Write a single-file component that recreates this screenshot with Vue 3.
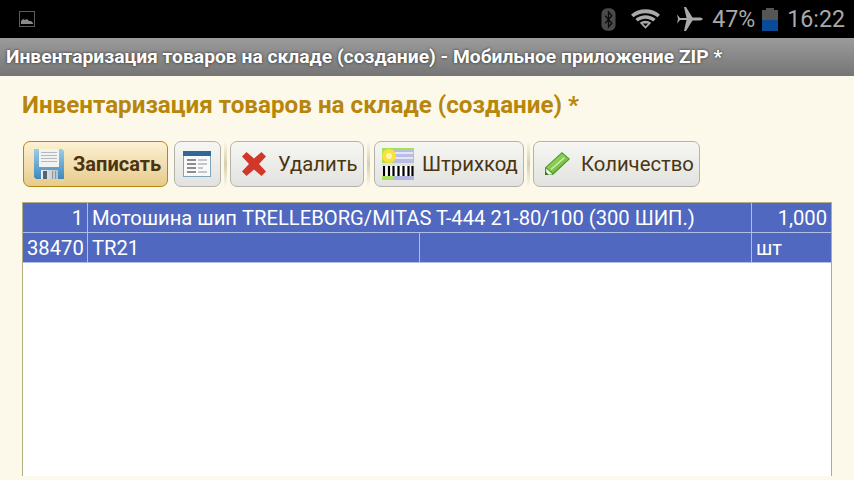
<template>
  <div class="screen">
    <div class="status">
      <svg class="st-pic" width="16" height="16" viewBox="0 0 16 16">
        <rect x="0.5" y="0.5" width="15" height="15" fill="none" stroke="#5c5c5c" stroke-width="1" />
        <path d="M2 13V10l2-2 2 1 2-1 2 2 2 0 2 2v1z" fill="#8a8a8a" />
      </svg>
      <div class="st-right">
        <svg class="st-bt" width="15" height="23" viewBox="0 0 16 24">
          <rect x="0.5" y="0" width="15" height="24" rx="6" fill="#4a4a4a" />
          <path d="M4.5 8l7 8-3.5 4V4l3.5 4-7 8" fill="none" stroke="#0c0c0c" stroke-width="1.4" />
        </svg>
        <svg class="st-wifi" width="29" height="20" viewBox="0 0 30 20">
          <path d="M0 5.500C8 -1.800 22 -1.800 30 5.500l-2.600 2.700C20.500 2.500 9.500 2.500 2.600 8.200z" fill="#a9a9a9" />
          <path d="M4.500 10C11 4.800 19 4.800 25.500 10l-2.600 2.700C18 8.800 12 8.800 7.100 12.700z" fill="#a9a9a9" />
          <path d="M9 14C13 11 17 11 21 14l-6 6z" fill="#a9a9a9" />
          <path d="M12.300 14.700h5.400L15 17.500z" fill="#000" />
        </svg>
        <svg class="st-plane" width="26" height="24" viewBox="0 0 26 24">
          <path d="M0 7.500l3 3.500h6.500L7 0h2l6.500 10.500H23c3.500 0 3.500 3 0 3h-7.500L9 24H7l2.500-11H3l-3 3.500 1-4.500z" fill="#a9a9a9" />
        </svg>
        <span class="st-text st-pct">47%</span>
        <div class="st-batt"><i class="st-cap"></i><i class="st-empty"></i><i class="st-fill"></i></div>
        <span class="st-text st-time">16:22</span>
      </div>
    </div>

    <div class="titlebar">Инвентаризация товаров на складе (создание) - Мобильное приложение ZIP *</div>

    <div class="content">
      <h1 class="heading">Инвентаризация товаров на складе (создание) *</h1>

      <div class="toolbar">
        <button class="btn primary">
          <svg width="30" height="30" viewBox="0 0 30 30">
            <defs>
              <linearGradient id="fl" x1="0" y1="0" x2="0" y2="1">
                <stop offset="0" stop-color="#9acbea" />
                <stop offset="1" stop-color="#3f88bd" />
              </linearGradient>
              <linearGradient id="sh" x1="0" y1="0" x2="1" y2="0">
                <stop offset="0" stop-color="#eef0f1" />
                <stop offset="1" stop-color="#b8bfc4" />
              </linearGradient>
              <linearGradient id="pen" x1="0" y1="0" x2="1" y2="1">
                <stop offset="0" stop-color="#a8e070" />
                <stop offset="1" stop-color="#5fae35" />
              </linearGradient>
            </defs>
            <path d="M0 0h28l2 2v28H2l-2-2z" fill="url(#fl)" />
            <rect x="5" y="0" width="20" height="18" fill="#f2f2f0" />
            <path d="M7 3.500h16M7 6.500h16M7 9.500h16M7 12.500h16" stroke="#b4b9bd" stroke-width="1" />
            <rect x="7" y="21" width="17" height="9" fill="url(#sh)" />
            <rect x="9" y="22" width="4" height="8" fill="#55646e" />
            <rect x="18" y="22" width="1" height="8" fill="#8d979e" />
            <rect x="21" y="22" width="1" height="8" fill="#8d979e" />
          </svg>
          <span>Записать</span>
        </button>
        <button class="btn square">
          <svg width="28" height="26" viewBox="0 0 28 26">
            <rect x="0.500" y="0.500" width="27" height="25" fill="#f7f9fb" stroke="#7fa2bd" />
            <rect x="0" y="0" width="28" height="5" fill="#2f6796" />
            <path d="M4 9h9M4 13h9M4 17h9M4 21h9" stroke="#8d8d8d" stroke-width="2" />
            <path d="M15 9h9M15 13h9M15 17h5M15 21h9" stroke="#c3c7ca" stroke-width="2" />
          </svg>
        </button>
        <i class="sep"></i>
        <button class="btn del">
          <svg width="24" height="24" viewBox="0 0 24 24">
            <path d="M4.500 0L12 6.500 19.500 0 24 4.500 17 12l7 7.500-4.500 4.500L12 17.500 4.500 24 0 19.500 7 12 0 4.500z" fill="#d1382a" />
          </svg>
          <span>Удалить</span>
        </button>
        <i class="sep"></i>
        <button class="btn code">
          <svg width="32" height="32" viewBox="0 0 32 32">
            <rect width="32" height="32" fill="#a9e05a" />
            <rect x="12" y="1" width="20" height="14" fill="#b9bde4" />
            <path d="M13 5h18M13 10h18" stroke="#e4e6f6" stroke-width="2" />
            <circle cx="7" cy="8" r="7" fill="#f8e23e" />
            <circle cx="7" cy="8" r="3" fill="#fff6b0" />
            <rect x="0" y="15" width="32" height="3" fill="#dfe7d0" />
            <rect x="0" y="18" width="32" height="10" fill="#fff" />
            <path d="M2 18v10M7 18v10M11.500 18v10M16.500 18v10M21.500 18v10M26.500 18v10M30.500 18v10" stroke="#000" stroke-width="2.200" />
            <rect x="12" y="28" width="20" height="4" fill="#b0b4e0" />
          </svg>
          <span>Штрихкод</span>
        </button>
        <i class="sep"></i>
        <button class="btn qty">
          <svg width="26" height="26" viewBox="0 0 26 26">
            <path d="M0 16.500L17 1l8 7L8 24H0z" fill="#4f9a2a" />
            <path d="M1.500 16.500L17 2.500l6.500 5.600L8 22z" fill="url(#pen)" />
            <path d="M6 18.500L19.500 6.500" stroke="#d0f0a8" stroke-width="1.500" />
            <path d="M1.200 17.500l6.300 5.700L1.200 24z" fill="#f6f6f4" />
            <path d="M0 20l4 4H0z" fill="#2f7d1e" />
          </svg>
          <span>Количество</span>
        </button>
      </div>

      <div class="table">
        <div class="row">
          <div class="cell num">1</div>
          <div class="cell name">Мотошина шип TRELLEBORG/MITAS T-444 21-80/100 (300 ШИП.)</div>
          <div class="cell num last">1,000</div>
        </div>
        <div class="row">
          <div class="cell num">38470</div>
          <div class="cell">TR21</div>
          <div class="cell"></div>
          <div class="cell last">шт</div>
        </div>
      </div>
    </div>
  </div>
</template>

<script setup>
</script>

<style>
html, body { margin: 0; background: #fcf9ea; }
</style>

<style scoped>
.screen { width: 854px; height: 480px; overflow: hidden; background: #fcf9ea; font-family: Roboto, sans-serif; display: flex; flex-direction: column; }
.status { height: 38px; flex: none; background: #000; display: flex; align-items: center; justify-content: space-between; padding: 0 9px 0 19px; box-sizing: border-box; }
.st-right { display: flex; align-items: center; }
.st-bt { margin-right: 15px; }
.st-wifi { margin-right: 17px; }
.st-plane { margin-right: 9px; }
.st-text { color: #a9a9a9; font-size: 23.2px; line-height: 38px; }
.st-batt { position: relative; width: 16px; height: 23px; margin: 0 9px 0 7px; }
.st-batt i { position: absolute; display: block; }
.st-cap { left: 4px; top: 0; width: 8px; height: 2px; background: #555; }
.st-empty { left: 0; top: 2px; width: 16px; height: 10px; background: #555; }
.st-fill { left: 0; top: 12px; width: 16px; height: 11px; background: #0b4a96; }
.titlebar { height: 38px; flex: none; box-sizing: border-box; padding-left: 6px; line-height: 38px; color: #fff; font-size: 19.26px; font-weight: 700; white-space: nowrap; background: linear-gradient(#9b9b9b, #757575); text-shadow: 0 0 3px rgba(0, 0, 0, .7); }
.content { flex: 1; min-height: 0; padding: 0 22px 4px; display: flex; flex-direction: column; }
.heading { margin: 15px 0 0; height: 28px; line-height: 28px; font-size: 24.2px; font-weight: 700; color: #b8860b; white-space: nowrap; }
.toolbar { display: flex; align-items: center; height: 46px; margin: 22px 0 15px 1px; }
.btn { height: 46px; box-sizing: border-box; display: flex; align-items: center; padding: 0; border: 1px solid #b3b3ab; border-radius: 7px; background: linear-gradient(#f6f6f2, #e2e2e0); color: #4a3510; font-family: Roboto, sans-serif; font-size: 20.3px; white-space: nowrap; }
.btn svg { flex: none; }
.primary { width: 145px; padding-left: 10px; gap: 9px; border-color: #b8860b; background: linear-gradient(#fdf1d3, #e6cb8c); font-weight: 700; font-size: 20px; margin-right: 6px; }
.square { width: 47px; padding-left: 8px; }
.del { width: 134px; padding-left: 11px; gap: 12px; }
.code { width: 150px; padding-left: 7px; gap: 8px; }
.qty { width: 167px; padding-left: 11px; gap: 10px; }
.sep { width: 3px; height: 46px; margin: 0 3px; background: linear-gradient(#fcf9ea, #d6cfae 50%, #fcf9ea); }
.sep:nth-of-type(2) { margin-right: 4px; }
.table { flex: 1; min-height: 0; border: 1px solid #b4ad82; border-bottom: none; background: #fff; }
.row { height: 30px; box-sizing: border-box; display: grid; grid-template-columns: 65px 332px 332px 1fr; background: #5068c0; border-bottom: 1px solid #b0bde4; color: #fff; font-size: 20.2px; }
.row:first-child { grid-template-columns: 65px 664px 1fr; }
.cell { line-height: 30px; padding: 0 4px; border-right: 1px solid #b0bde4; white-space: nowrap; overflow: hidden; }
.cell.num { text-align: right; }
.cell.last { border-right: none; }
</style>
